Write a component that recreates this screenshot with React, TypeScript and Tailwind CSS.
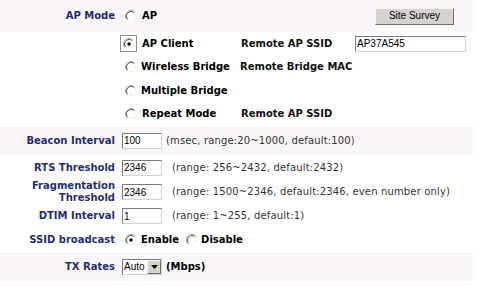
import React from 'react'

const label = 'w-[115px] shrink-0 text-right font-bold text-[#1f2d6e] leading-[12px]'
const field =
  "h-[16px] border border-t-[#7b7b7b] border-l-[#7b7b7b] border-r-[#d6d3ce] border-b-[#d6d3ce] bg-white px-[1px] font-['Liberation_Sans',Arial,sans-serif] text-[10px] text-black outline-none"

function Radio({ checked }: { checked?: boolean }) {
  return (
    <svg width="12" height="12" viewBox="0 0 12 12" className="shrink-0">
      <circle cx="6" cy="6" r="4.2" fill="#fff" />
      <path d="M2.11 9.89 A5.5 5.5 0 0 1 9.89 2.11" fill="none" stroke="#a8a8a8" />
      <path d="M2.82 9.18 A4.5 4.5 0 0 1 9.18 2.82" fill="none" stroke="#5a5a5a" />
      <path d="M9.18 2.82 A4.5 4.5 0 0 1 2.82 9.18" fill="none" stroke="#f0efed" />
      {checked && <circle cx="6" cy="6" r="1.7" fill="#000" />}
    </svg>
  )
}

function TextField({ value, width }: { value: string; width: string }) {
  return <input readOnly value={value} className={`${field} ${width}`} />
}

function ModeRow({
  h,
  text,
  textGap,
  remote,
}: {
  h: string
  text: string
  textGap: string
  remote?: string
}) {
  return (
    <div className={`flex items-center ${h}`}>
      <div className="w-[125px] shrink-0" />
      <Radio />
      <div className={`${textGap} w-[99px] shrink-0 font-bold text-black`}>{text}</div>
      {remote && <div className="w-[114px] shrink-0 font-bold text-[#111]">{remote}</div>}
    </div>
  )
}

function HintRow({
  h,
  name,
  value,
  hint,
  hintGap,
  tinted,
}: {
  h: string
  name: React.ReactNode
  value: string
  hint: string
  hintGap: string
  tinted?: boolean
}) {
  return (
    <div className={`flex items-center w-[473px] ${h} ${tinted ? 'bg-[#faf6fa]' : ''}`}>
      <div className={label}>{name}</div>
      <div className="ml-[7px] flex">
        <TextField value={value} width="w-[40px]" />
      </div>
      <div className={`${hintGap} text-[#333] tracking-[0.15px]`}>{hint}</div>
    </div>
  )
}

export default function App() {
  return (
    <div className="w-[502px] h-[289px] bg-white font-['DejaVu_Sans',Verdana,sans-serif] text-[10px] leading-[12px]">
      {/* AP mode */}
      <div className="flex items-center h-[32px] w-[473px] bg-[#faf6fa]">
        <div className={label}>AP Mode</div>
        <div className="ml-[10px] flex">
          <Radio />
        </div>
        <div className="ml-[5px] w-[99px] shrink-0 font-bold text-black">AP</div>
        <button className="ml-[134px] h-[17px] w-[79px] border border-t-[#f4f4f4] border-l-[#f4f4f4] border-r-[#6f6f6f] border-b-[#6f6f6f] bg-[#d6d3ce] font-['Liberation_Sans',Arial,sans-serif] text-[10px] text-black">
          Site Survey
        </button>
      </div>
      <div className="flex items-center h-[23px]">
        <div className="w-[120px] shrink-0" />
        <div className="flex h-[17px] w-[17px] items-center justify-center border border-[#8e8e8e]">
          <Radio checked />
        </div>
        <div className="ml-[5px] w-[99px] shrink-0 font-bold text-black">AP Client</div>
        <div className="w-[114px] shrink-0 font-bold text-[#111]">Remote AP SSID</div>
        <TextField value="AP37A545" width="w-[111px]" />
      </div>
      <ModeRow h="h-[24px]" text="Wireless Bridge" textGap="ml-[4px]" remote="Remote Bridge MAC" />
      <ModeRow h="h-[23px]" text="Multiple Bridge" textGap="ml-[4px]" />
      <ModeRow h="h-[24px]" text="Repeat Mode" textGap="ml-[5px]" remote="Remote AP SSID" />

      <HintRow
        h="h-[29px]"
        tinted
        name="Beacon Interval"
        value="100"
        hintGap="ml-[4px]"
        hint="(msec, range:20~1000, default:100)"
      />
      <HintRow
        h="h-[25px]"
        name="RTS Threshold"
        value="2346"
        hintGap="ml-[10px]"
        hint="(range: 256~2432, default:2432)"
      />
      <HintRow
        h="h-[24px]"
        name={
          <>
            Fragmentation
            <br />
            Threshold
          </>
        }
        value="2346"
        hintGap="ml-[10px]"
        hint="(range: 1500~2346, default:2346, even number only)"
      />
      <HintRow
        h="h-[24px]"
        name="DTIM Interval"
        value="1"
        hintGap="ml-[10px]"
        hint="(range: 1~255, default:1)"
      />

      {/* SSID broadcast */}
      <div className="flex items-center h-[24px] w-[473px]">
        <div className={label}>SSID broadcast</div>
        <div className="ml-[10px] flex">
          <Radio checked />
        </div>
        <div className="ml-[4px] font-bold text-black">Enable</div>
        <div className="ml-[7px] flex">
          <Radio />
        </div>
        <div className="ml-[3px] font-bold text-black">Disable</div>
      </div>

      {/* TX rates */}
      <div className="flex items-center h-[29px] w-[473px] bg-[#faf6fa]">
        <div className={label}>TX Rates</div>
        <div className="ml-[7px] flex h-[16px] w-[40px] items-center border border-t-[#7b7b7b] border-l-[#7b7b7b] border-r-[#d6d3ce] border-b-[#d6d3ce] bg-white">
          <span className="flex-1 pl-[1px] font-['Liberation_Sans',Arial,sans-serif] text-[10px] text-black">
            Auto
          </span>
          <span className="flex h-[14px] w-[14px] items-center justify-center border border-t-[#f4f4f4] border-l-[#f4f4f4] border-r-[#6f6f6f] border-b-[#6f6f6f] bg-[#d6d3ce]">
            <svg width="7" height="4" viewBox="0 0 7 4">
              <path d="M0 0 H7 L3.5 4 Z" fill="#000" />
            </svg>
          </span>
        </div>
        <div className="ml-[4px] font-bold text-black">(Mbps)</div>
      </div>
    </div>
  )
}
